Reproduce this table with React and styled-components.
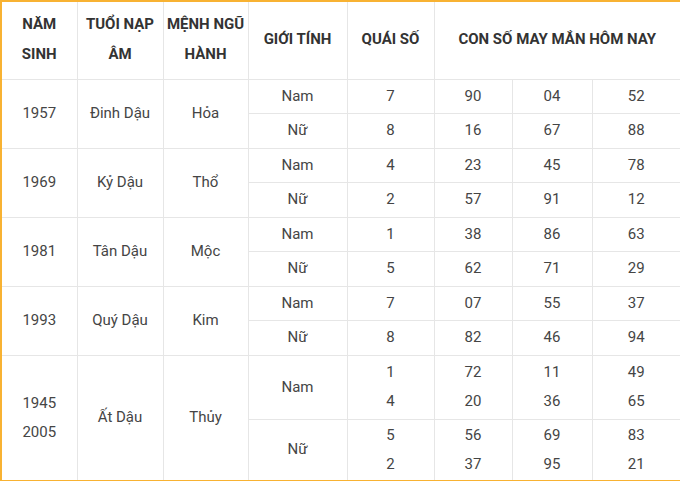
import React from 'react'
import styled, { createGlobalStyle } from 'styled-components'

const GlobalStyle = createGlobalStyle`
    html, body {
        margin: 0;
        padding: 0;
        background: #fff;
    }
    body {
        font-family: Roboto, "Noto Sans", "Liberation Sans", sans-serif;
    }
`

const rows = [
    { year: ['1957'], tuoi: 'Đinh Dậu', menh: 'Hỏa', nam: [['7'], ['90'], ['04'], ['52']], nu: [['8'], ['16'], ['67'], ['88']] },
    { year: ['1969'], tuoi: 'Kỷ Dậu', menh: 'Thổ', nam: [['4'], ['23'], ['45'], ['78']], nu: [['2'], ['57'], ['91'], ['12']] },
    { year: ['1981'], tuoi: 'Tân Dậu', menh: 'Mộc', nam: [['1'], ['38'], ['86'], ['63']], nu: [['5'], ['62'], ['71'], ['29']] },
    { year: ['1993'], tuoi: 'Quý Dậu', menh: 'Kim', nam: [['7'], ['07'], ['55'], ['37']], nu: [['8'], ['82'], ['46'], ['94']] },
    {
        year: ['1945', '2005'], tuoi: 'Ất Dậu', menh: 'Thủy', tall: true,
        nam: [['1', '4'], ['72', '20'], ['11', '36'], ['49', '65']],
        nu: [['5', '2'], ['56', '37'], ['69', '95'], ['83', '21']],
    },
]

const widths = [76, 86, 85, 99, 87, 78, 80, 89]

const Lines = ({ items }) => items.map((t, i) => (
    <React.Fragment key={i}>{i > 0 && <br />}{t}</React.Fragment>
))

const App = () => (
    <>
        <GlobalStyle />
        <Table>
            <colgroup>
                {widths.map((w, i) => <col key={i} style={{ width: w }} />)}
            </colgroup>
            <thead>
                <HeadRow>
                    <HeadCell>NĂM<br />SINH</HeadCell>
                    <HeadCell>TUỔI NẠP<br />ÂM</HeadCell>
                    <HeadCell>MỆNH NGŨ<br />HÀNH</HeadCell>
                    <HeadCell>GIỚI TÍNH</HeadCell>
                    <HeadCell>QUÁI SỐ</HeadCell>
                    <HeadCell colSpan={3}>CON SỐ MAY MẮN HÔM NAY</HeadCell>
                </HeadRow>
            </thead>
            <tbody>
                {rows.map(r => (
                    <React.Fragment key={r.year[0]}>
                        <Row $tall={r.tall} $first>
                            <Cell rowSpan={2}><Lines items={r.year} /></Cell>
                            <Cell rowSpan={2}>{r.tuoi}</Cell>
                            <Cell rowSpan={2}>{r.menh}</Cell>
                            <Cell>Nam</Cell>
                            {r.nam.map((v, i) => <Cell key={i}><Lines items={v} /></Cell>)}
                        </Row>
                        <Row $tall={r.tall}>
                            <Cell>Nữ</Cell>
                            {r.nu.map((v, i) => <Cell key={i}><Lines items={v} /></Cell>)}
                        </Row>
                    </React.Fragment>
                ))}
            </tbody>
        </Table>
    </>
)

const Table = styled.table`
    width: 680px;
    height: 480px;
    table-layout: fixed;
    border-collapse: collapse;
    border: 2px solid #f8b232;
    color: #454545;
    font-size: 15px;
`

const HeadRow = styled.tr`
    height: 78px;
`

const HeadCell = styled.th`
    border: 1px solid #e6e6e6;
    font-weight: 700;
    color: #333;
    line-height: 30px;
    padding: 0 2px 2px;
    text-align: center;
    vertical-align: middle;
    white-space: nowrap;
`

const Row = styled.tr`
    height: ${p => p.$tall ? (p.$first ? '64px' : '62px') : '34.5px'};
`

const Cell = styled.td`
    border: 1px solid #e6e6e6;
    padding: 0;
    line-height: 29px;
    text-align: center;
    vertical-align: middle;
    white-space: nowrap;
`

export default App
